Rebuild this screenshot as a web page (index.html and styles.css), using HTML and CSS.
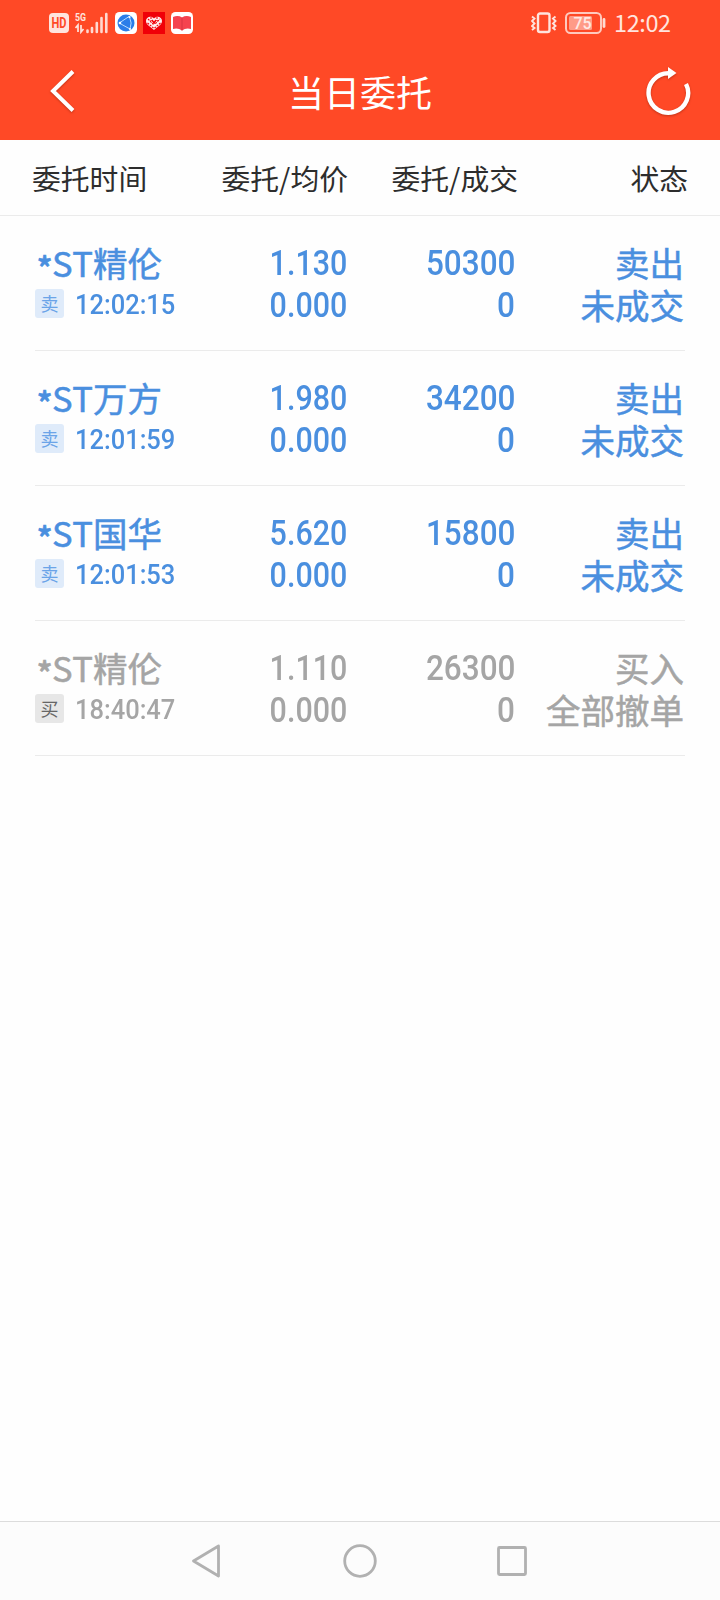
FILE: index.html
```html
<!DOCTYPE html>
<html lang="zh-CN">
<head>
<meta charset="utf-8"/>
<meta content="width=device-width, initial-scale=1.0" name="viewport"/>
<title>当日委托</title>
<link rel="stylesheet" href="styles.css">
</head>
<body>
<div class="app">
  <header class="header">
    <div class="status-bar">
      <div class="status-left">
        <svg width="20" height="20" viewBox="0 0 20 20">
          <rect width="20" height="20" rx="4" fill="#ffe4de"/>
          <text class="hd-text" x="10" y="14.8" text-anchor="middle" textLength="15" lengthAdjust="spacingAndGlyphs">HD</text>
        </svg>
        <svg width="33" height="22" viewBox="0 0 33 22">
          <text class="net-text" x="0" y="9" textLength="11" lengthAdjust="spacingAndGlyphs">5G</text>
          <path d="M3 20V13L0.5 16M6 13v7l2.5-3" fill="none" stroke="#ffe4de" stroke-width="1.7"/>
          <path d="M12.5 18.500v1.500M17 16v4M21.800 11v9M26.500 6v14M31.300 2v18" fill="none" stroke="#ffd9d0" stroke-width="2.6" stroke-linecap="round"/>
        </svg>
        <svg width="22" height="22" viewBox="0 0 22 22">
          <rect width="22" height="22" rx="4.500" fill="#fff"/>
          <circle cx="11" cy="11" r="8.500" fill="#2b7de9"/>
          <path d="M5 10.500 14 4.500M5 11.500l10 5.500M14.500 5q3 6 .5 12" fill="none" stroke="#b9dcff" stroke-width="1"/>
          <circle cx="5" cy="11" r="1.300" fill="#fff"/>
          <circle cx="14.500" cy="5" r="1.100" fill="#fff"/>
          <circle cx="15" cy="17" r="1.100" fill="#fff"/>
        </svg>
        <svg width="22" height="22" viewBox="0 0 22 22">
          <rect width="22" height="22" fill="#f00008"/>
          <path d="M11 6.500C8 3 3 5 3 9c0 4 5.500 6.500 8 9 2.500-2.500 8-5 8-9 0-4-5-6-8-2.500z" fill="#fff0f0"/>
          <path d="M5 7l5 5 1-2 1 2 5-5M4.500 11l6 5M17.500 11l-6 5M8 5v4M14 5v4" fill="none" stroke="#f00008" stroke-width="1.100" stroke-dasharray="2 1"/>
          <path d="M9 8l2 3 2-3" fill="none" stroke="#f00008" stroke-width="1.500"/>
        </svg>
        <svg width="22" height="22" viewBox="0 0 22 22">
          <rect width="22" height="22" rx="4.500" fill="#fff"/>
          <path d="M2 5q5-2 9 .5Q15 3 20 5v12q-5-1.500-9 1.500Q7 15.500 2 17z" fill="#f5434f"/>
          <path d="M11 5.500v13" stroke="#d93543" stroke-width="1"/>
        </svg>
      </div>
      <div class="status-right">
        <svg width="26" height="22" viewBox="0 0 26 22" fill="none" stroke="#ffe4de">
          <rect x="7" y="1.500" width="11.500" height="18.500" rx="2" stroke-width="2.400"/>
          <path d="M1 4.500l2.500 2L1 9l2.500 2.500L1 14l2.500 2L1 18M24.500 4.500l-2.500 2L24.500 9 22 11.500l2.500 2.500-2.500 2 2.500 2" stroke-width="1.900"/>
        </svg>
        <svg class="battery" width="42" height="22" viewBox="0 0 42 22">
          <rect x="1" y="1" width="35" height="20" rx="4.500" fill="none" stroke="#ffc9bd" stroke-width="2"/>
          <rect x="4" y="4" width="23" height="14" rx="1.500" fill="#ff9b87"/>
          <path d="M39 7.500v7" stroke="#ffd9d0" stroke-width="2.800" stroke-linecap="round"/>
          <text class="battery-text" x="17.500" y="16.800" text-anchor="middle">75</text>
        </svg>
        <span class="clock">12:02</span>
      </div>
    </div>
    <div class="nav-bar">
      <svg class="back" width="28" height="46" viewBox="0 0 28 46">
        <path d="M25 3.500 5 23l20 19.500" fill="none" stroke="#fff" stroke-width="4"/>
      </svg>
      <h1>当日委托</h1>
      <svg class="refresh" width="50" height="52" viewBox="0 0 50 52">
        <path d="M26 8.200A19.800 19.800 0 1 0 43 19" fill="none" stroke="#fff" stroke-width="4.400"/>
        <path d="M25 2v12l8.500-6z" fill="#fff"/>
      </svg>
    </div>
  </header>

  <div class="table-head">
    <span>委托时间</span>
    <span>委托/均价</span>
    <span>委托/成交</span>
    <span>状态</span>
  </div>

  <main class="orders">
    <div class="order">
      <div class="stock">
        <div class="name"><span class="star">*</span><span class="st">ST</span>精伦</div>
        <div class="meta"><span class="tag">卖</span><span class="time">12:02:15</span></div>
      </div>
      <div class="num price"><span>1.130</span><span>0.000</span></div>
      <div class="num"><span>50300</span><span>0</span></div>
      <div class="state"><span>卖出</span><span>未成交</span></div>
    </div>
    <div class="order">
      <div class="stock">
        <div class="name"><span class="star">*</span><span class="st">ST</span>万方</div>
        <div class="meta"><span class="tag">卖</span><span class="time">12:01:59</span></div>
      </div>
      <div class="num price"><span>1.980</span><span>0.000</span></div>
      <div class="num"><span>34200</span><span>0</span></div>
      <div class="state"><span>卖出</span><span>未成交</span></div>
    </div>
    <div class="order">
      <div class="stock">
        <div class="name"><span class="star">*</span><span class="st">ST</span>国华</div>
        <div class="meta"><span class="tag">卖</span><span class="time">12:01:53</span></div>
      </div>
      <div class="num price"><span>5.620</span><span>0.000</span></div>
      <div class="num"><span>15800</span><span>0</span></div>
      <div class="state"><span>卖出</span><span>未成交</span></div>
    </div>
    <div class="order cancelled">
      <div class="stock">
        <div class="name"><span class="star">*</span><span class="st">ST</span>精伦</div>
        <div class="meta"><span class="tag">买</span><span class="time">18:40:47</span></div>
      </div>
      <div class="num price"><span>1.110</span><span>0.000</span></div>
      <div class="num"><span>26300</span><span>0</span></div>
      <div class="state"><span>买入</span><span>全部撤单</span></div>
    </div>
  </main>

  <footer class="system-nav">
    <svg width="36" height="36" viewBox="0 0 36 36"><path d="M28.500 3 3.500 18l25 15z"/></svg>
    <svg width="36" height="36" viewBox="0 0 36 36"><circle cx="18" cy="18" r="15.300"/></svg>
    <svg width="36" height="36" viewBox="0 0 36 36"><rect x="4.500" y="4.500" width="27" height="27" rx="1"/></svg>
  </footer>
</div>
</body>
</html>
```

FILE: styles.css
```css
* {
  box-sizing: border-box;
}
body {
  margin: 0;
  font-family: "Noto Sans CJK SC", sans-serif;
  background-color: #fefefe;
}
svg {
  display: block;
  flex: none;
}
.app {
  height: 1600px;
  display: flex;
  flex-direction: column;
}
.header {
  height: 140px;
  background-color: #ff4926;
  color: #fff;
}
.status-bar {
  height: 45px;
  padding: 0 49px;
  display: flex;
  justify-content: space-between;
  align-items: center;
}
.status-left {
  display: flex;
  align-items: center;
  gap: 6.3px;
}
.status-right {
  display: flex;
  align-items: center;
}
.hd-text {
  font: bold 14px Roboto, sans-serif;
  fill: #ff4926;
}
.net-text {
  font: bold 11px Roboto, sans-serif;
  fill: #ffe4de;
}
.battery {
  margin-left: 8px;
}
.battery-text {
  font: 500 16px Roboto, sans-serif;
  fill: #ffe9e4;
}
.clock {
  width: 57px;
  margin-left: 7px;
  padding-bottom: 2px;
  font: 23.5px/30px "Noto Sans CJK SC", sans-serif;
  letter-spacing: -0.4px;
  color: #ffe4de;
  white-space: nowrap;
}
.nav-bar {
  height: 91px;
  padding: 0 27px 0 48px;
  display: grid;
  grid-template-columns: 100px 1fr 121px;
  align-items: center;
}
.nav-bar h1 {
  margin: 0;
  padding-top: 1px;
  font-size: 36px;
  font-weight: 400;
  line-height: 54px;
  text-align: center;
}
.back, .refresh {
  filter: drop-shadow(0 1px 1px rgba(100, 20, 0, 0.4));
}
.refresh {
  justify-self: end;
}
.table-head {
  height: 76px;
  padding: 0 32px;
  display: grid;
  grid-template-columns: 165px 151px 170px 1fr;
  align-items: center;
  border-bottom: 1px solid #ebebeb;
  font-size: 28.8px;
  color: #2d2d2d;
  text-align: right;
}
.table-head span:first-child {
  text-align: left;
}
.orders {
  flex: 1;
  padding: 0 35px;
}
.order {
  height: 135px;
  padding-top: 27px;
  display: grid;
  grid-template-columns: 160px 152px 168px 1fr;
  border-bottom: 1px solid #ebebeb;
  color: #4a8fdf;
}
.name, .state {
  margin-top: -2px;
  -webkit-text-stroke: 0.5px currentColor;
}
.name {
  height: 42px;
  display: flex;
  font-size: 34.5px;
  line-height: 42px;
}
.star {
  width: 17px;
  padding: 4px 0 0 2px;
  font-size: 30px;
  font-weight: 700;
}
.st {
  width: 41px;
  letter-spacing: 0.4px;
}
.meta {
  height: 42px;
  padding-top: 6px;
  display: flex;
  align-items: flex-start;
}
.tag {
  width: 29px;
  height: 29px;
  border-radius: 3px;
  background-color: #dfebfa;
  color: #6ba4e8;
  font-size: 18px;
  line-height: 28px;
  text-align: center;
}
.time {
  margin-left: 11px;
  font: 500 28px/31px Roboto, sans-serif;
  transform: scaleX(0.91);
  transform-origin: left;
}
.num, .state {
  display: flex;
  flex-direction: column;
  align-items: flex-end;
}
.num span {
  font: 500 35px/42px Roboto, sans-serif;
  transform: scaleX(0.9);
  transform-origin: right;
}
.price span {
  transform: scaleX(0.87);
}
.state {
  padding-right: 1px;
}
.state span {
  font-size: 34.5px;
  line-height: 42px;
  white-space: nowrap;
}
.cancelled {
  color: #a5a5a5;
}
.cancelled .tag {
  background-color: #e7e7e7;
  color: #666;
}
.system-nav {
  height: 79px;
  border-top: 1px solid #dcdcdc;
  background-color: #fcfcfc;
  display: flex;
  justify-content: center;
  align-items: center;
  gap: 116px;
}
.system-nav svg {
  fill: none;
  stroke: #b1b1b1;
  stroke-width: 2.8;
  stroke-linejoin: round;
}
```
